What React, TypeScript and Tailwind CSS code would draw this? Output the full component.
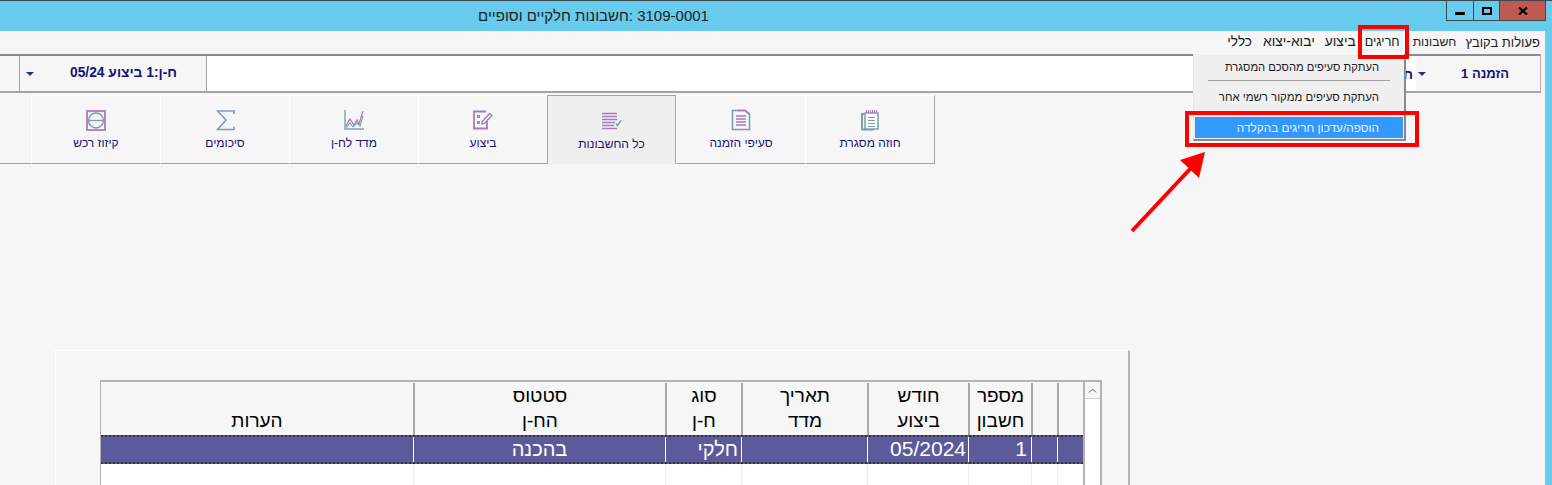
import React from 'react';

const tabs = [
  { label: 'חוזה מסגרת', icon: 'contract', w: 'w-[130px] border-r border-r-[#a4a4a4] border-t-[#a4a4a4]' },
  { label: 'סעיפי הזמנה', icon: 'doc', w: 'w-[129px]' },
  { label: 'כל החשבונות', icon: 'list', w: 'w-[129px]', active: true },
  { label: 'ביצוע', icon: 'edit', w: 'w-[129px]' },
  { label: 'מדד לח-ן', icon: 'chart', w: 'w-[129px]' },
  { label: 'סיכומים', icon: 'sigma', w: 'w-[129px]' },
  { label: 'קיזוז רכש', icon: 'minus', w: 'w-[129px]' },
];

const menuItems = [
  { label: 'פעולות בקובץ', cls: 'text-[13px] ml-[2px]' },
  { label: 'חשבונות', cls: 'text-[12.2px] ml-[6px]' },
  { label: 'חריגים', cls: 'text-[12.6px] ml-[2px]' },
  { label: 'ביצוע', cls: 'text-[13.8px] ml-[3px]' },
  { label: 'יבוא-יצוא', cls: 'text-[13.8px] ml-[4px]' },
  { label: 'כללי', cls: 'text-[13.6px]' },
];

const columns = [
  { w: 'w-[26px]', top: '', bottom: '', value: '' },
  { w: 'w-[26px]', top: '', bottom: '', value: '' },
  { w: 'w-[63px]', top: 'מספר', bottom: 'חשבון', value: '1', cell: 'text-right pr-[4px] text-[21px]' },
  { w: 'w-[101px]', top: 'חודש', bottom: 'ביצוע', value: '05/2024', cell: 'text-right pr-[2px] text-[21px]' },
  { w: 'w-[126px]', top: 'תאריך', bottom: 'מדד', value: '' },
  { w: 'w-[76px]', top: 'סוג', bottom: 'ח-ן', value: 'חלקי', cell: 'text-right pr-[3px] text-[20px]' },
  { w: 'w-[252px]', top: 'סטטוס', bottom: 'הח-ן', value: 'בהכנה', cell: 'text-center text-[20px]' },
  { w: 'w-[312px]', top: '', bottom: 'הערות', value: '' },
];

const TabIcon = ({ name }: { name: string }) => {
  const purple = '#a87cbc';
  const blue = '#7c9db5';
  if (name === 'contract')
    return (
      <svg width="18" height="22" viewBox="0 0 18 22" fill="none">
        <path d="M3.5 5H1V20.5H13" stroke={blue} strokeWidth="2" />
        <rect x="4" y="4" width="13" height="16" stroke={blue} strokeWidth="1.5" fill="#fff" />
        <path d="M5.5 1V4M7.5 1V4M9.5 1V4M11.5 1V4M13.5 1V4M15.5 1V4" stroke={purple} />
        <path d="M7 8.5H14M7 11.5H14M7 14.5H14M7 17.5H14" stroke={blue} strokeWidth="1.2" />
      </svg>
    );
  if (name === 'doc')
    return (
      <svg width="20" height="22" viewBox="0 0 20 22" fill="none">
        <path d="M1.5 1.5H14L18.5 5V20.5H1.5Z" stroke={blue} strokeWidth="1.6" />
        <path d="M6 1.5H14L18.5 5" stroke={purple} strokeWidth="1.6" />
        <path d="M5 7H15M5 10H15M5 13H15M5 16H15" stroke={purple} strokeWidth="1.4" />
      </svg>
    );
  if (name === 'list')
    return (
      <svg width="20" height="18" viewBox="0 0 20 18" fill="none">
        <path d="M0 1.5H15M0 4.5H15M0 7.5H15M0 10.5H13M0 13.5H12M0 16.5H15" stroke={purple} strokeWidth="1.6" />
        <path d="M14 11.5L15.5 13.5L19 8.5" stroke={blue} strokeWidth="1.4" />
      </svg>
    );
  if (name === 'edit')
    return (
      <svg width="20" height="20" viewBox="0 0 20 20" fill="none">
        <path d="M13 1.5H1V18.5H14V11" stroke={purple} strokeWidth="1.8" />
        <rect x="4" y="5" width="3" height="3" fill={blue} />
        <rect x="4" y="11" width="3" height="3" fill={blue} />
        <path d="M9 12L16.5 3.5L19 5.5L11.5 13.5L9 14Z" stroke={purple} strokeWidth="1.3" />
      </svg>
    );
  if (name === 'chart')
    return (
      <svg width="20" height="20" viewBox="0 0 20 20" fill="none">
        <path d="M1 0V19H20" stroke={blue} strokeWidth="1.4" />
        <path d="M2 16L6 9L10 15L13 10L15 14L19 1" stroke={purple} strokeWidth="1.3" />
        <path d="M2 18L6 13L9 17L13 13L16 16L19 6" stroke={blue} strokeWidth="1.1" />
      </svg>
    );
  if (name === 'sigma')
    return (
      <svg width="19" height="21" viewBox="0 0 19 21" fill="none">
        <path d="M18 4V1H1.5L10 10L1.5 19.5H18V16.5" stroke={blue} strokeWidth="1.6" />
      </svg>
    );
  return (
    <svg width="20" height="21" viewBox="0 0 20 21" fill="none">
      <rect x="1" y="1" width="18" height="19" stroke={purple} strokeWidth="1.8" />
      <circle cx="10" cy="10.5" r="7.5" stroke={blue} strokeWidth="1.4" />
      <path d="M3 10.5H17" stroke={blue} strokeWidth="1.4" />
    </svg>
  );
};

const Arrow = () => <span className="block w-0 h-0 border-x-[4px] border-x-transparent border-t-[4px] border-t-[#123a78]" />;

export default function App() {
  return (
    <div className="relative h-[485px] w-[1552px] overflow-hidden bg-[#66cbec] font-['Liberation_Sans',sans-serif]" dir="ltr">
      {/* title bar */}
      <div className="relative h-[31px] border-t border-[#3c4a50]">
        <div className="absolute left-[470px] top-[6px] w-[247px] text-center text-[15px] leading-[17px] text-[#1b2226] whitespace-nowrap" dir="rtl">
          3109-0001 :חשבונות חלקיים וסופיים
        </div>
        <div className="absolute right-[6px] top-0 flex h-[20px] border-x border-b border-[#3c4a50]">
          <div className="flex w-[27px] items-end justify-center border-r border-[#3c4a50] pb-[5px]">
            <span className="block h-[3px] w-[10px] bg-black" />
          </div>
          <div className="flex w-[26px] items-center justify-center border-r border-[#3c4a50]">
            <span className="block h-[8px] w-[10px] border-2 border-black" />
          </div>
          <div className="flex w-[45px] items-center justify-center bg-[#c0594f]">
            <svg width="10" height="8" viewBox="0 0 10 8">
              <path d="M1 0.5L9 7.5M9 0.5L1 7.5" stroke="#000" strokeWidth="2.2" />
            </svg>
          </div>
        </div>
      </div>

      {/* window body */}
      <div className="mr-[7px] h-[454px] bg-[#f6f6f6]">
        <div className="flex h-[23px] items-center justify-start gap-[7px] pr-[5px] text-[#1a1a1a]" dir="rtl">
          {menuItems.map((m) => (
            <span key={m.label} className={`whitespace-nowrap ${m.cls}`}>{m.label}</span>
          ))}
        </div>

        {/* combo row */}
        <div className="flex h-[39px] border-y-2 border-y-[#a4a4a4] border-t-[#8c8c8c] mr-[4px] border-r border-r-[#b0b0b0]" dir="rtl">
          <div className="flex w-[125px] items-center border-l border-l-[#fff] pr-[31px] text-[13px] font-bold text-[#12127a]">
            <span className="whitespace-nowrap">הזמנה 1</span>
            <span className="mr-[35px]"><Arrow /></span>
          </div>
          <div className="flex-1 bg-white pr-[2px] pt-[10px] text-[14px] font-bold leading-[16px] text-[#12127a]">ח</div>
          <div className="flex w-[188px] items-center border-x border-x-[#a4a4a4] pr-[29px] text-[13.8px] font-bold text-[#12127a]">
            <span className="whitespace-nowrap">ח-ן:1 ביצוע 05/24</span>
            <span className="mr-[36px]"><Arrow /></span>
          </div>
          <div className="w-[19px]" />
        </div>

        {/* tabs */}
        <div className="mt-[2px] flex h-[69px] pr-[610px]" dir="rtl">
          {tabs.map((t) => (
            <div
              key={t.label}
              className={
                t.active
                  ? `flex ${t.w} shrink-0 flex-col items-center border-x border-t border-[#a4a4a4] bg-[#efefef] pt-[13px] text-[#12127a]`
                  : `flex ${t.w} shrink-0 flex-col items-center border-b border-b-[#a4a4a4] border-t border-t-white border-l border-l-white pt-[12px] text-[#12127a]`
              }
            >
              <div className="flex h-[24px] items-center justify-center"><TabIcon name={t.icon} /></div>
              <span className="mt-[4px] whitespace-nowrap text-[12px] leading-[14px]">{t.label}</span>
            </div>
          ))}
          <div className="flex-1 border-b border-b-[#a4a4a4]" />
        </div>

        {/* table panel */}
        <div className="ml-[55px] mt-[186px] w-[1075px] h-[135px] border-l border-t border-l-white border-t-white border-r-2 border-r-[#b4b4b4] pl-[44px] pt-[29px]">
          <div className="flex items-start">
            <div className="h-[105px] w-[985px] border-t-2 border-l border-r-2 border-[#b4b4b4] bg-white" dir="rtl">
              <div className="flex h-[53px] bg-[#f6f6f6] pt-[1px]">
                {columns.map((c, i) => (
                  <div key={i} className={`${c.w} flex shrink-0 flex-col items-center border-l-2 border-l-[#a8a8a8] text-[19px] leading-[25px] text-black last:border-l-0`}>
                    <span className="h-[25px] whitespace-nowrap">{c.top}</span>
                    <span className="h-[25px] whitespace-nowrap">{c.bottom}</span>
                  </div>
                ))}
              </div>
              <div className="flex h-[29px] border-y-2 border-dotted border-y-[#333] bg-[#5c5a9b]">
                {columns.map((c, i) => (
                  <div key={i} className={`${c.w} shrink-0 border-l border-l-white leading-[24px] text-white last:border-l-0 ${c.cell ?? ''}`}>
                    {c.value}
                  </div>
                ))}
              </div>
              <div className="flex h-[21px]">
                {columns.map((c, i) => (
                  <div key={i} className={`${c.w} shrink-0 border-l border-l-[#ececec] last:border-l-0`} />
                ))}
              </div>
            </div>
            <div className="h-[105px] w-[17px] border-t-2 border-r-2 border-[#b4b4b4] bg-white">
              <div className="flex h-[17px] items-center justify-center border-b border-[#d0d0d0] bg-[#f6f6f6]">
                <svg width="9" height="5" viewBox="0 0 9 5" fill="none">
                  <path d="M1 4.5L4.5 1L8 4.5" stroke="#606060" />
                </svg>
              </div>
            </div>
          </div>
        </div>
      </div>

      {/* dropdown menu */}
      <div className="absolute left-[1193px] top-[53px] h-[88px] w-[213px] border-r-2 border-b-2 border-l border-t border-r-[#8a8a8a] border-b-[#8a8a8a] border-l-[#e8e8e8] border-t-white bg-[#f0f0f0] text-[#1a1a1a]" dir="rtl">
        <div className="pr-[25px] pt-[6px] text-[11.2px] leading-[15px] whitespace-nowrap">העתקת סעיפים מהסכם המסגרת</div>
        <div className="mx-[14px] mt-[5px] h-[1px] bg-[#a0a0a0]" />
        <div className="pr-[25px] pt-[9px] text-[11.4px] leading-[15px] whitespace-nowrap">העתקת סעיפים ממקור רשמי אחר</div>
        <div className="mx-[1px] mt-[12px] h-[21px] bg-[#3399ff] pr-[24px] text-[11.8px] leading-[22px] text-[#e8f2ff] whitespace-nowrap">הוספה/עדכון חריגים בהקלדה</div>
      </div>

      {/* annotations */}
      <div className="absolute left-[1358px] top-[25px] h-[34px] w-[51px] border-4 border-[#ff0000]" />
      <div className="absolute left-[1185px] top-[111px] h-[36px] w-[234px] border-4 border-[#ff0000]" />
      <svg className="absolute left-[1125px] top-[148px]" width="85" height="90" viewBox="0 0 85 90" fill="none">
        <path d="M7 83L66 20" stroke="#ff0000" strokeWidth="4" />
        <path d="M80 4L74 30L55 12Z" fill="#ff0000" />
      </svg>
    </div>
  );
}
